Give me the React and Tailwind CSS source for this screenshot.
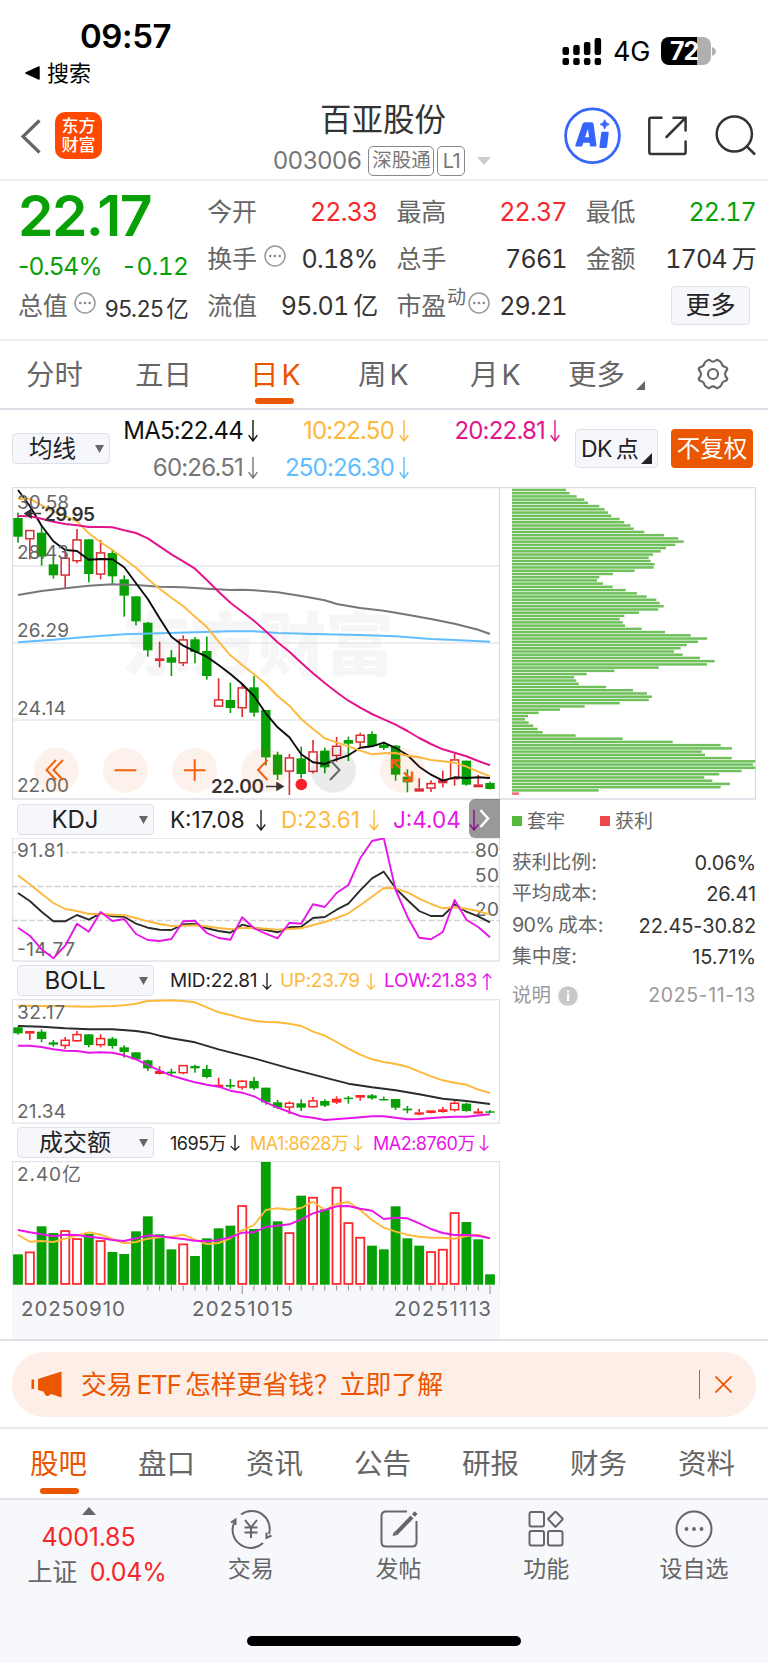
import React from "react";

const X0 = 18;
const STEP = 11.8;
const px = (i) => X0 + i * STEP;

/* Series values are stored in thirds of a pixel, measured from each panel's origin. */
const seq = (values, origin) => values.map((v, i) => `${px(i).toFixed(1)},${(origin + v / 3).toFixed(1)}`).join(" ");
const pts = (pairs, origin) => pairs.map(([i, v]) => `${px(i).toFixed(1)},${(origin + v / 3).toFixed(1)}`).join(" ");

const PRICE = [
  ["g", 98, 114, 170, 188], ["r", 150, 150, 178, 238], ["g", 138, 158, 230, 257], ["g", 233, 253, 286, 296],
  ["r", 208, 233, 287, 323], ["r", 147, 178, 244, 250], ["g", 178, 178, 282, 307], ["r", 180, 217, 284, 298],
  ["g", 207, 219, 289, 311], ["g", 286, 298, 347, 410], ["g", 349, 349, 424, 436], ["g", 426, 428, 511, 530],
  ["r", 485, 535, 543, 562], ["g", 510, 532, 548, 588], ["r", 466, 478, 550, 558], ["g", 471, 478, 516, 550],
  ["g", 470, 513, 588, 599], ["r", 595, 658, 680, 680], ["g", 608, 660, 684, 699], ["r", 610, 622, 685, 711],
  ["g", 588, 622, 698, 710], ["g", 690, 690, 832, 856], ["g", 815, 824, 884, 900], ["r", 822, 832, 875, 945],
  ["g", 800, 835, 882, 895], ["r", 780, 814, 876, 880], ["g", 803, 812, 862, 880], ["r", 771, 797, 828, 845],
  ["g", 770, 780, 791, 843], ["r", 758, 764, 788, 803], ["g", 754, 762, 798, 800], ["g", 785, 794, 804, 810],
  ["g", 795, 797, 884, 902], ["g", 868, 890, 907, 937], ["r", 895, 925, 935, 935], ["r", 901, 909, 926, 936],
  ["r", 872, 900, 910, 922], ["r", 822, 838, 898, 917], ["g", 842, 842, 914, 917], ["r", 885, 913, 922, 922],
  ["g", 905, 909, 927, 928],
];
const MA5 = [30, 78, 137, 184, 210, 213, 239, 237, 238, 262, 310, 357, 415, 470, 497, 514, 530, 555, 582, 612, 648, 700, 742, 772, 823, 847, 852, 838, 826, 803, 799, 788, 804, 825, 860, 884, 902, 892, 894, 892, 894];
const MA10 = [56, 56, 76, 94, 108, 124, 160, 187, 210, 236, 263, 297, 326, 353, 378, 410, 441, 485, 526, 555, 583, 612, 648, 677, 717, 747, 775, 787, 799, 812, 823, 820, 819, 827, 832, 840, 844, 848, 860, 875, 889];
const MA20 = [108, 109, 116, 125, 132, 136, 141, 141, 142, 151, 159, 175, 199, 223, 244, 266, 300, 335, 368, 395, 422, 454, 487, 515, 548, 580, 609, 637, 662, 683, 702, 718, 734, 753, 774, 792, 808, 818, 829, 843, 856];
const MA60 = [[0, 345], [2, 333], [4, 325], [6, 317], [8, 313], [10, 315], [12, 320], [14, 322], [16, 326], [18, 330], [19, 329], [20, 331], [22, 337], [24, 348], [26, 361], [27, 372], [29, 384], [31, 392], [33, 404], [35, 417], [37, 431], [39, 449], [40, 462]];
const MA250 = [[0, 487], [3, 479], [6, 470], [9, 463], [12, 460], [15, 457], [18, 454], [20, 454], [22, 459], [25, 462], [29, 465], [32, 469], [35, 477], [37, 480], [40, 485]];

const K = [294, 318, 350, 379, 379, 360, 374, 355, 364, 365, 386, 398, 404, 405, 388, 387, 400, 408, 413, 389, 398, 405, 412, 397, 395, 369, 366, 344, 326, 286, 250, 230, 280, 315, 348, 363, 363, 328, 350, 364, 382];
const D = [241, 268, 296, 324, 342, 348, 357, 357, 359, 361, 369, 379, 387, 393, 392, 391, 394, 399, 403, 399, 399, 401, 404, 402, 400, 390, 381, 369, 355, 331, 305, 279, 280, 292, 311, 327, 340, 337, 341, 348, 359];
const J = [398, 422, 463, 490, 452, 386, 410, 351, 378, 372, 417, 435, 438, 432, 379, 377, 414, 429, 434, 367, 400, 416, 430, 383, 386, 328, 336, 294, 270, 190, 138, 130, 285, 365, 428, 433, 411, 315, 374, 396, 427];

const BOLL = [
  ["g", 200, 202, 220, 224], ["r", 213, 213, 221, 240], ["g", 208, 215, 237, 246], ["g", 240, 247, 254, 260],
  ["r", 231, 239, 258, 267], ["r", 213, 222, 244, 246], ["g", 223, 223, 255, 262], ["r", 223, 234, 256, 262],
  ["g", 231, 236, 258, 266], ["g", 256, 262, 276, 293], ["g", 277, 277, 298, 300], ["g", 299, 301, 325, 333],
  ["r", 319, 333, 342, 343], ["g", 326, 335, 340, 348], ["r", 315, 315, 340, 343], ["g", 314, 318, 325, 338],
  ["g", 315, 327, 351, 355], ["r", 353, 374, 381, 381], ["g", 357, 375, 380, 386], ["r", 360, 362, 383, 389],
  ["g", 351, 363, 385, 390], ["g", 383, 383, 427, 434], ["g", 420, 427, 443, 447], ["r", 424, 428, 443, 462],
  ["g", 418, 430, 443, 453], ["r", 411, 421, 442, 443], ["g", 418, 423, 437, 441], ["r", 409, 416, 428, 432],
  ["g", 408, 413, 417, 431], ["r", 405, 405, 413, 422], ["g", 402, 406, 415, 419], ["g", 410, 417, 420, 421],
  ["g", 417, 417, 443, 450], ["g", 438, 446, 451, 460], ["r", 447, 457, 464, 466], ["r", 451, 451, 459, 460],
  ["r", 441, 448, 456, 458], ["r", 423, 428, 451, 455], ["g", 428, 431, 453, 455], ["r", 445, 454, 461, 463],
  ["g", 450, 454, 457, 459],
];
const UP = [[0, 137], [4, 139], [6, 140], [8, 138], [9, 136], [10, 131], [11, 123], [13, 121], [14, 123], [15, 127], [16, 142], [17, 157], [18, 165], [19, 175], [20, 182], [21, 186], [22, 187], [23, 191], [24, 198], [25, 215], [26, 227], [27, 246], [28, 266], [29, 284], [30, 298], [31, 306], [32, 312], [33, 320], [34, 335], [35, 349], [36, 361], [37, 368], [38, 374], [39, 389], [40, 399]];
const MID = [[0, 198], [2, 200], [4, 205], [6, 208], [8, 208], [10, 213], [11, 218], [12, 227], [13, 235], [15, 247], [17, 268], [20, 295], [23, 325], [26, 353], [28, 371], [30, 382], [32, 391], [34, 403], [36, 416], [38, 423], [40, 432]];
const LOW = [[0, 257], [1, 257], [2, 261], [3, 268], [4, 272], [5, 273], [6, 278], [7, 277], [8, 278], [9, 286], [10, 298], [11, 315], [12, 332], [13, 347], [14, 357], [15, 367], [16, 374], [17, 380], [18, 392], [19, 398], [20, 409], [21, 427], [22, 443], [23, 456], [24, 469], [25, 473], [26, 480], [28, 475], [30, 469], [31, 469], [33, 478], [34, 477], [36, 472], [37, 470], [38, 470], [40, 463]];

const VOL = "g403 r396 g319 g339 r332 r356 g342 r362 g396 g402 g334 g289 g343 g388 r372 g408 g355 g325 g317 r257 g327 g126 g304 r338 g227 r232 g268 r202 r308 r352 g377 g388 g259 g355 g377 r395 r388 r278 g306 g358 g463"
  .split(" ")
  .map((s) => [s[0], Number(s.slice(1))]);
const VMA1 = [344, 365, 363, 366, 356, 347, 337, 344, 357, 370, 366, 356, 352, 350, 344, 359, 372, 369, 355, 331, 315, 270, 265, 269, 264, 245, 270, 252, 246, 270, 300, 323, 335, 344, 350, 353, 353, 356, 348, 344, 355];
const VMA2 = [330, 337, 343, 349, 344, 345, 350, 354, 360, 363, 355, 346, 349, 353, 357, 362, 364, 360, 352, 338, 337, 321, 317, 313, 298, 280, 270, 259, 258, 266, 272, 297, 293, 295, 310, 327, 339, 345, 345, 347, 355];

const CHIPS = [198, 209, 230, 253, 264, 298, 314, 324, 334, 359, 373, 391, 401, 433, 492, 535, 551, 526, 498, 482, 459, 446, 452, 464, 461, 404, 339, 298, 291, 309, 338, 377, 411, 440, 469, 479, 491, 475, 417, 373, 359, 368, 375, 425, 495, 572, 621, 594, 560, 542, 522, 548, 600, 644, 621, 476, 343, 260, 222, 229, 236, 318, 399, 441, 456, 446, 359, 254, 180, 116, 84, 75, 86, 100, 113, 128, 227, 368, 518, 662, 696, 605, 615, 695, 766, 759, 766, 725, 658, 613, 637, 690, 662, 296, 57];

const GREEN = "#07a007";

function Candles({ data, origin, red }) {
  return data.map(([c, h, t, b, l], i) => {
    const x = px(i);
    const y = (v) => origin + v / 3;
    if (c === "g") {
      return (
        <g key={i} fill={GREEN}>
          <rect x={x - 0.8} y={y(h)} width="1.6" height={(l - h) / 3} />
          <rect x={x - 4.7} y={y(t)} width="9.4" height={Math.max((b - t) / 3, 1.4)} />
        </g>
      );
    }
    const thin = b - t < 14;
    return (
      <g key={i} fill={red}>
        <rect x={x - 0.8} y={y(h)} width="1.6" height={Math.max((t - h) / 3, 0)} />
        <rect x={x - 0.8} y={y(b)} width="1.6" height={Math.max((l - b) / 3, 0)} />
        {thin ? (
          <rect x={x - 4.7} y={y(t)} width="9.4" height={(b - t) / 3} />
        ) : (
          <rect x={x - 4} y={y(t) + 0.6} width="8" height={(b - t) / 3 - 1.2} fill="#fff" stroke={red} strokeWidth="1.5" />
        )}
      </g>
    );
  });
}

function Line({ points, color, w = 1.9 }) {
  return <polyline points={points} fill="none" stroke={color} strokeWidth={w} strokeLinejoin="round" />;
}

function Label({ x, y, w, children, size = 19, fill = "#666", weight = 400 }) {
  return (
    <text x={x} y={y} fontSize={size} fill={fill} fontWeight={weight} textLength={w} lengthAdjust="spacing">
      {children}
    </text>
  );
}

function Arrow({ up = false, h = 21 }) {
  return (
    <svg width="10" height={h} viewBox="0 0 10 21" preserveAspectRatio="none" fill="none" stroke="currentColor" strokeWidth="1.4" className={up ? "shrink-0 rotate-180" : "shrink-0"}>
      <path d="M5 0V20M0.7 14.5L5 20L9.3 14.5" />
    </svg>
  );
}

function Dots() {
  return (
    <svg width="22" height="22" viewBox="0 0 22 22" className="shrink-0">
      <circle cx="11" cy="11" r="10" fill="none" stroke="#999" strokeWidth="1.5" />
      <g fill="#888">
        <circle cx="6.3" cy="11" r="1.3" />
        <circle cx="11" cy="11" r="1.3" />
        <circle cx="15.7" cy="11" r="1.3" />
      </g>
    </svg>
  );
}

function Caret() {
  return (
    <svg width="9" height="8" viewBox="0 0 9 8" className="shrink-0">
      <path d="M0 0H9L4.5 8Z" fill="#666" />
    </svg>
  );
}

function StatusBar() {
  return (
    <div className="flex h-[92px] justify-between">
      <div className="flex flex-col pt-[18px] pl-[25px] text-black">
        <span className="pl-[55px] text-[33px] leading-[36px] font-semibold tracking-[-0.4px]">09:57</span>
        <span className="mt-[6px] flex items-center text-[22px] leading-[26px] font-normal">
          <svg width="15" height="14" viewBox="0 0 15 14" className="mr-[7px]">
            <path d="M1 7L14 1V13Z" stroke="#000" strokeWidth="1.5" strokeLinejoin="round" />
          </svg>
          搜索
        </span>
      </div>
      <div className="mt-[37px] mr-[52px] flex h-[28px] items-center text-black">
        <svg width="40" height="27" viewBox="0 0 40 27">
          <rect x="0.5" y="9" width="6.5" height="8" rx="2" />
          <rect x="11.2" y="7" width="6.5" height="10" rx="2" />
          <rect x="21.9" y="4" width="6.5" height="13" rx="2" />
          <rect x="32.6" y="0" width="6.5" height="17" rx="2" />
          <rect x="0.5" y="20" width="6.5" height="7" rx="2" />
          <rect x="11.2" y="20" width="6.5" height="7" rx="2" />
          <rect x="21.9" y="20" width="6.5" height="7" rx="2" />
          <rect x="32.6" y="20" width="6.5" height="7" rx="2" />
        </svg>
        <span className="ml-[11px] pt-[2px] text-[27px] leading-[32px] font-normal tracking-[-0.3px]">4G</span>
        <span className="ml-[11px] flex h-[28px] w-[50px] items-center rounded-[8px] bg-linear-to-r from-black from-72% to-[#b0b0b0] to-72% pl-[9px] text-[25px] leading-[32px] font-bold tracking-[-1px] text-white">72</span>
        <svg width="4" height="9" viewBox="0 0 4 9" className="ml-[1px]">
          <path d="M0 0C3 1 4 3 4 4.500S3 8 0 9Z" fill="#b0b0b0" />
        </svg>
      </div>
    </div>
  );
}

function Header() {
  return (
    <div className="flex h-[89px] items-start border-b-2 border-[#f0f0f2] pr-[12px] pl-[20px]">
      <svg width="21" height="35" viewBox="0 0 21 35" className="mt-[27px]" fill="none" stroke="#666" strokeWidth="3.200">
        <path d="M19.500 1.500L3 17.500L19.500 33.500" />
      </svg>
      <div className="mt-[20px] ml-[14px] flex h-[47px] w-[47px] flex-col items-center justify-center rounded-[10px] bg-[#ff4800] text-[17px] leading-[19px] font-medium text-white">
        <span>东方</span>
        <span>财富</span>
      </div>
      <div className="ml-[171px] flex w-[220px] flex-col">
        <span className="mt-[8px] pl-[47px] text-[31.500px] leading-[40px] text-[#333]">百亚股份</span>
        <div className="mt-[6px] flex items-center text-[#777]">
          <span className="text-[24px] leading-[30px] tracking-[-0.3px]">003006</span>
          <span className="ml-[7px] flex h-[30px] w-[66px] items-center justify-center rounded-[5px] border-[1.500px] border-[#888] text-[19.500px]">深股通</span>
          <span className="ml-[3px] flex h-[30px] w-[28px] items-center justify-center rounded-[5px] border-[1.500px] border-[#888] text-[20px] tracking-[-0.5px]">L1</span>
          <svg width="14" height="8" viewBox="0 0 14 8" className="ml-[12px]">
            <path d="M0 0H14L7 8Z" fill="#ccc" />
          </svg>
        </div>
      </div>
      <svg width="58" height="58" viewBox="0 0 58 58" className="mt-[15px] ml-[70px]">
        <circle cx="29.500" cy="28.800" r="26.900" fill="#fff" stroke="#3565fa" strokeWidth="2.800" />
        <g fill="#3565fa">
          <path fillRule="evenodd" d="M13 39.500Q12 39.500 12.400 38L19.500 17Q20 15.300 22 15.300H28.500Q30.300 15.300 30.600 17L33.500 38.200Q33.600 39.500 32.300 39.500H28Q27 39.500 26.900 38.500L26.500 35.800H20.300L19.500 38.300Q19.200 39.500 18 39.500ZM22 30.300L25 22L26 30.300Z" />
          <path d="M39.500 24.700H44.500Q45.900 24.700 45.700 26L44 40Q43.800 41 42.700 41H37.500Q36.200 41 36.400 39.700L37.200 33.500L38.200 26Q38.300 24.700 39.500 24.700Z" />
          <path d="M41.700 12.600Q42.500 16.500 46.300 17.300Q42.500 18.100 41.700 22Q40.900 18.100 37.100 17.300Q40.900 16.500 41.700 12.600Z" stroke="#3565fa" strokeWidth="0.800" />
        </g>
      </svg>
      <svg width="42" height="42" viewBox="0 0 42 42" className="mt-[24px] ml-[25px]" fill="none" stroke="#333" strokeWidth="2.500" strokeLinecap="round">
        <path d="M15.500 1.700H5Q3.300 1.700 3.300 3.500V36Q3.300 38 5.200 38H37.800Q39.600 38 39.600 36.200V25.500" />
        <path d="M27.500 1.700H39.600V14.500M39 2.300L20.500 21" />
      </svg>
      <svg width="42" height="42" viewBox="0 0 42 42" className="mt-[23px] ml-[26px]" fill="none" stroke="#333" strokeWidth="2.500">
        <circle cx="20.300" cy="19" r="17.600" />
        <path d="M32.800 31.300L41 39.500" />
      </svg>
    </div>
  );
}

function Stat({ label, value, unit, tone = "text-[#333]", icon, sup }) {
  return (
    <div className="flex h-[47px] items-center justify-between">
      <span className="flex items-center text-[25px] tracking-[-0.3px] text-[#666]">
        {label}
        {sup && <span className="mb-[16px] ml-px text-[19px]">{sup}</span>}
        {icon && <span className={sup ? "mb-[8px] ml-[2px]" : "mb-[8px] ml-[7px]"}><Dots /></span>}
      </span>
      <span className={`mr-[-1px] text-[25px] tracking-[-0.8px] whitespace-nowrap tabular-nums ${tone}`}>
        {value}
        {unit && <span className="pl-[5px]">{unit}</span>}
      </span>
    </div>
  );
}

function Quote() {
  const red = "text-[#f6262a]";
  const green = "text-[#07a007]";
  return (
    <div className="h-[160px] border-b-2 border-[#ececee] pt-[8px] pr-[13px] pl-[18px]">
      <div className="grid grid-cols-4 gap-x-[20px]">
        <div className="flex h-[47px] items-center pt-[6px] text-[57px] leading-none font-semibold tracking-[-1.600px] text-[#07a007]">22.17</div>
        <Stat label="今开" value="22.33" tone={red} />
        <Stat label="最高" value="22.37" tone={red} />
        <Stat label="最低" value="22.17" tone={green} />
        <div className="mr-[-1px] flex h-[47px] items-center justify-between pt-[13px] text-[24.500px] tracking-[-0.6px] text-[#07a007]">
          <span>-0.54%</span>
          <span className="tabular-nums">-0.12</span>
        </div>
        <Stat label="换手" value="0.18%" icon />
        <Stat label="总手" value="7661" />
        <Stat label="金额" value="1704" unit="万" />
        <div className="mr-[-1px] flex h-[47px] items-center justify-between">
          <span className="flex items-center text-[25px] tracking-[-0.3px] text-[#666]">
            总值
            <span className="mb-[8px] ml-[7px]"><Dots /></span>
          </span>
          <span className="pt-[4px] text-[22.500px] tracking-[-0.5px] whitespace-nowrap text-[#333]">95.25<span className="pl-[3px]">亿</span></span>
        </div>
        <Stat label="流值" value="95.01" unit="亿" />
        <Stat label="市盈" value="29.21" icon sup="动" />
        <div className="flex h-[47px] items-center justify-end pr-[5px]">
          <button className="mb-[3px] h-[39px] w-[79px] rounded-[4px] border border-[#dfe1ea] bg-[#f6f7fb] text-[25px] leading-[36px] text-[#222]">更多</button>
        </div>
      </div>
    </div>
  );
}

function PeriodTabs() {
  return (
    <div className="flex h-[69px] items-start border-b-2 border-[#dddfe6] pt-[13px] pl-[26px] text-[28.500px] leading-[42px] text-[#666]">
      <span className="w-[109px]">分时</span>
      <span className="w-[115px]">五日</span>
      <span className="flex w-[108px] flex-col text-[#eb5600]">
        <span>日<span className="pl-[3px]">K</span></span>
        <span className="mt-[2px] ml-[5px] h-[6px] w-[39px] rounded-full bg-[#eb5600]" />
      </span>
      <span className="w-[112px]">周<span className="pl-[3px]">K</span></span>
      <span className="w-[98px]">月<span className="pl-[3px]">K</span></span>
      <span>更多</span>
      <svg width="9" height="9" viewBox="0 0 9 9" className="mt-[27px] ml-[11px]">
        <path d="M9 0V9H0Z" fill="#666" />
      </svg>
      <svg width="34" height="34" viewBox="0 0 34 34" className="mt-[3px] ml-[51px]" fill="none" stroke="#666" strokeWidth="2.200" strokeLinejoin="round">
        <path d="M11.500 3.500Q13 2.300 14.300 3.500Q17 5.800 19.700 3.500Q21 2.300 22.500 3.500Q25 4.300 25.600 6.500Q26.300 9.500 29.300 10Q31.200 10.500 31.200 12.500Q29 15 29 17Q29 19 31.200 21.500Q31.200 23.500 29.300 24Q26.300 24.500 25.600 27.500Q25 29.700 22.500 30.500Q21 31.700 19.700 30.500Q17 28.200 14.300 30.500Q13 31.700 11.500 30.500Q9 29.700 8.400 27.500Q7.700 24.500 4.700 24Q2.800 23.500 2.800 21.500Q5 19 5 17Q5 15 2.800 12.500Q2.800 10.500 4.700 10Q7.700 9.500 8.400 6.500Q9 4.300 11.500 3.500Z" />
        <circle cx="17" cy="17" r="5" />
      </svg>
    </div>
  );
}

function Ma({ children, color }) {
  return (
    <span className={`flex items-center justify-end gap-[5px] text-[24px] leading-[37px] tracking-[-0.8px] whitespace-nowrap ${color}`}>
      {children}
      <Arrow h={22} />
    </span>
  );
}

function MaRow() {
  return (
    <div className="flex h-[77px] items-start pl-[12px]">
      <button className="mt-[23px] flex h-[31px] w-[98px] items-center rounded-[4px] border border-[#dfe1ea] bg-[#f6f7fb] pl-[16px] text-[23.500px] leading-[28px] text-[#222]">
        均线
        <span className="ml-[19px]"><Caret /></span>
      </button>
      <div className="mt-[2px] ml-[11px] grid w-[440px] grid-cols-[137px_151px_151px]">
        <Ma color="text-[#111]">MA5:22.44</Ma>
        <Ma color="text-[#fdb93c]">10:22.50</Ma>
        <Ma color="text-[#e4148c]">20:22.81</Ma>
        <Ma color="text-[#777]">60:26.51</Ma>
        <Ma color="text-[#62bdff]">250:26.30</Ma>
      </div>
      <button className="relative mt-[19px] ml-[14px] h-[39px] w-[83px] rounded-[4px] border border-[#dfe1ea] bg-[#f6f7fb] pl-[5px] text-left text-[23px] leading-[36px] tracking-[-0.7px] text-[#222]">
        DK<span className="pl-[4px]">点</span>
        <svg width="11" height="11" viewBox="0 0 11 11" className="absolute right-[5px] bottom-[3px]">
          <path d="M11 0V11H0Z" fill="#222" />
        </svg>
      </button>
      <button className="mt-[19px] ml-[13px] h-[39px] w-[82px] rounded-[4px] bg-[#eb5600] text-[23.500px] leading-[36px] text-white">不复权</button>
    </div>
  );
}

function PriceChart() {
  const o = 480;
  return (
    <svg width="488" height="313" viewBox="12 487 488 313" className="block">
      <text x="122" y="670" fontSize="69" fontWeight="900" fill="#f6f6f6" textLength="272">东方财富</text>
      <g stroke="#e6e8f0" strokeWidth="1.500">
        <path d="M12 566H500M12 643H500M12 720H500" />
        <rect x="12.500" y="487.500" width="487" height="311.500" fill="none" stroke="#dcdde6" />
      </g>
      <Candles data={PRICE} origin={o} red="#d92b32" />
      <Line points={pts(MA60, o)} color="#777" w={2.1} />
      <Line points={pts(MA250, o)} color="#62bdff" w={2.1} />
      <Line points={seq(MA5, o)} color="#0c0c0c" />
      <Line points={seq(MA10, o)} color="#fdb93c" />
      <Line points={seq(MA20, o)} color="#e4148c" w={2} />
      <Label x={17} y={509} w={52}>30.58</Label>
      <Label x={17} y={559} w={52}>28.43</Label>
      <Label x={17} y={636.5} w={52}>26.29</Label>
      <Label x={17} y={714.5} w={49}>24.14</Label>
      <Label x={17} y={792} w={52}>22.00</Label>
      <path d="M41 513.500H26M31 509.500L25 513.500L31 517.500Z" stroke="#333" fill="#333" strokeWidth="1.500" />
      <Label x={44} y={520.5} w={51} fill="#333" weight={600}>29.95</Label>
      <Label x={211} y={793} w={53} fill="#333" weight={600}>22.00</Label>
      <path d="M266 786.500H281M277 783L283 786.500L277 790Z" stroke="#333" fill="#333" strokeWidth="1.500" />
      <circle cx="301.300" cy="784.500" r="5.800" fill="#f9202a" />
      <g fill="#eb5600" fillOpacity="0.08">
        <circle cx="56.300" cy="770.300" r="22.500" />
        <circle cx="125.300" cy="770.300" r="22.500" />
        <circle cx="194.700" cy="770.300" r="22.500" />
        <circle cx="264" cy="770.300" r="22.500" />
        <circle cx="402.500" cy="770.300" r="22.500" />
        <circle cx="333.500" cy="770.300" r="22.500" fill="#000" />
      </g>
      <g fill="none" stroke="#f4610f" strokeWidth="2">
        <path d="M56 760L46.500 770L56 780M63 760L53.500 770L63 780" />
        <path d="M114.500 770.300H136.300M184 770.300H205.500M194.700 759.300V781" />
        <path d="M267.500 760L258 770L267.500 780" />
        <path d="M400 768L392.500 760.500M392 768.500V760.500H400.500M404 772.500L412 780.500M403.500 780.500H412V771.500" strokeWidth="2.400" />
        <path d="M330 760L339.500 770L330 780" stroke="#666" />
      </g>
    </svg>
  );
}

function IndicatorRow({ name, height, size, children }) {
  return (
    <div className={`flex items-start pl-[5px] ${height}`}>
      <button className="flex h-[31px] w-[137px] shrink-0 items-center rounded-[4px] border border-[#dfe1ea] bg-[#f6f7fb] pr-[5px] text-[24px] leading-[28px] text-[#222]">
        <span className="flex-1 pr-[7px] pt-px text-center">{name}</span>
        <Caret />
      </button>
      <div className={`ml-[16px] flex h-[32px] items-center whitespace-nowrap ${size}`}>{children}</div>
    </div>
  );
}

function Kdj() {
  return (
    <>
      <div className="relative">
        <IndicatorRow name="KDJ" height="h-[38px] pt-[4px]" size="text-[22.500px]">
          <span className="flex w-[111px] items-center gap-[11px] text-[#222]">K:17.08<Arrow /></span>
          <span className="flex w-[112px] items-center gap-[9px] text-[#fdb93c]">D:23.61<Arrow /></span>
          <span className="flex items-center gap-[8px] text-[#e815e8]">J:4.04<Arrow /></span>
        </IndicatorRow>
        <div className="absolute top-[-1px] right-0 flex h-[39px] w-[31px] items-center justify-center rounded-l-[6px] bg-black/40">
          <svg width="11" height="19" viewBox="0 0 11 19" fill="none" stroke="#fff" strokeWidth="2.600">
            <path d="M1.500 1L9 9.500L1.500 18" />
          </svg>
        </div>
      </div>
      <svg width="488" height="124" viewBox="12 838 488 124" className="block">
        <rect x="12.500" y="838" width="487" height="123" fill="none" stroke="#e2e3ea" strokeWidth="1.500" />
        <path d="M12 852.500H500M12 886.500H500M12 920.500H500" stroke="#d2d2d2" strokeWidth="1.600" strokeDasharray="6 2.500" />
        <path d="M16 852.500H66M475 852.500H500" stroke="#fff" strokeWidth="3" />
        <Label x={17} y={857} w={47}>91.81</Label>
        <Label x={17} y={956} w={58}>-14.77</Label>
        <Label x={475} y={857} w={24}>80</Label>
        <Label x={475} y={882} w={24}>50</Label>
        <Label x={475} y={916} w={24}>20</Label>
        <Line points={seq(K, 795)} color="#2b2b2b" />
        <Line points={seq(D, 795)} color="#fdb93c" />
        <Line points={seq(J, 795)} color="#e815e8" />
      </svg>
    </>
  );
}

function Boll() {
  return (
    <>
      <IndicatorRow name="BOLL" height="h-[37px] pt-[3px]" size="text-[19px] leading-[34px]">
        <span className="flex w-[110px] items-center gap-[5px] tracking-[-0.2px] text-[#222]">MID:22.81<Arrow h={17} /></span>
        <span className="flex w-[104px] items-center gap-[6px] tracking-[-0.3px] text-[#fdb93c]">UP:23.79<Arrow h={17} /></span>
        <span className="flex items-center gap-[5px] tracking-[-0.3px] text-[#e815e8]">LOW:21.83<Arrow up h={17} /></span>
      </IndicatorRow>
      <svg width="488" height="125" viewBox="12 999 488 125" className="block">
        <rect x="12.500" y="999.700" width="487" height="123.500" fill="none" stroke="#e2e3ea" strokeWidth="1.300" />
        <Line points={pts(UP, 960)} color="#fdb93c" />
        <Label x={17} y={1019} w={48}>32.17</Label>
        <Label x={17} y={1118} w={49}>21.34</Label>
        <Candles data={BOLL} origin={960} red="#fa2226" />
        <Line points={pts(MID, 960)} color="#2b2b2b" />
        <Line points={pts(LOW, 960)} color="#e815e8" />
      </svg>
    </>
  );
}

function Volume() {
  const base = 1284.7;
  return (
    <>
      <IndicatorRow name="成交额" height="h-[37px] pt-[3px]" size="text-[18px] tracking-[-0.5px]">
        <span className="flex w-[80px] items-center gap-[4px] text-[#222]">1695万<Arrow h={16} /></span>
        <span className="flex w-[123px] items-center gap-[4px] text-[#fdb93c]">MA1:8628万<Arrow h={16} /></span>
        <span className="flex items-center gap-[4px] text-[#e815e8]">MA2:8760万<Arrow h={16} /></span>
      </IndicatorRow>
      <svg width="488" height="178" viewBox="12 1161 488 178" className="block">
        <rect x="12" y="1285" width="488" height="54" fill="#f7f8fb" />
        <path d="M12.500 1285V1161.700H499.500V1285" fill="none" stroke="#e2e3ea" strokeWidth="1.300" />
        {VOL.map(([c, t], i) => {
          const y = 1120 + t / 3;
          return c === "g" ? (
            <rect key={i} x={px(i) - 4.9} y={y} width="9.8" height={base - y} fill={GREEN} />
          ) : (
            <rect key={i} x={px(i) - 4.1} y={y + 0.4} width="8.2" height={base - y - 1.2} fill="#fff" stroke="#fa2a2e" strokeWidth="1.800" />
          );
        })}
        <g stroke="#8c8c8c" strokeWidth="1">
          {Array.from({ length: 30 }, (_, k) => k + 11).map((i) => (
            <line key={i} x1={px(i)} x2={px(i)} y1="1285.500" y2={i === 19 || i === 40 ? 1294 : 1290.5} />
          ))}
        </g>
        <Line points={seq(VMA1, 1120)} color="#fdb93c" />
        <Line points={seq(VMA2, 1120)} color="#e815e8" />
        <Label x={17} y={1181} w={64} weight={375}>2.40亿</Label>
        <Label x={21} y={1316} w={104} size={20.5}>20250910</Label>
        <Label x={192} y={1316} w={101} size={20.5}>20251015</Label>
        <Label x={394} y={1316} w={97} size={20.5}>20251113</Label>
      </svg>
    </>
  );
}

function ChipRow({ label, value }) {
  return (
    <div className="flex h-[31.500px] items-center justify-between">
      <span className="text-[19.800px] text-[#666]">{label}</span>
      <span className="text-[20px] tracking-[-0.1px] text-[#333]">{value}</span>
    </div>
  );
}

function ChipPanel() {
  return (
    <div className="w-[256px]">
      <svg width="256" height="313" viewBox="500 487 256 313" className="block">
        <path d="M500 487.500H755.500V799H500" fill="none" stroke="#dcdde6" strokeWidth="1.500" />
        {CHIPS.map((e, i) => (
          <rect key={i} x="512" y={488.7 + i * 3.2305} width={(e - 36) / 3} height="2.5" fill={i === 94 ? "#f4696b" : "#6fc05b"} />
        ))}
      </svg>
      <div className="pl-[12px]">
        <div className="mt-[8px] flex h-[28px] items-center text-[19px] text-[#666]">
          <span className="mr-[5px] mb-[2px] h-[10px] w-[10px] bg-[#56b83c]" />
          <span className="w-[73px]">套牢</span>
          <span className="mr-[5px] mb-[2px] h-[10px] w-[10px] bg-[#ee474a]" />
          <span>获利</span>
        </div>
        <div className="mt-[11px]">
          <ChipRow label="获利比例:" value="0.06%" />
          <ChipRow label="平均成本:" value="26.41" />
          <ChipRow label={<><span className="tracking-[-0.7px]">90%</span><span className="pl-[4px]">成本:</span></>} value="22.45-30.82" />
          <ChipRow label="集中度:" value="15.71%" />
        </div>
        <div className="mt-[7px] flex h-[31px] items-center text-[19.500px] text-[#999]">
          说明
          <svg width="20" height="20" viewBox="0 0 20 20" className="ml-[7px]">
            <circle cx="10" cy="10" r="9.800" fill="#c8c8c8" />
            <rect x="9" y="8" width="2.200" height="7" fill="#fff" />
            <rect x="9" y="4.500" width="2.200" height="2.200" fill="#fff" />
          </svg>
          <span className="ml-auto tracking-[0.6px]">2025-11-13</span>
        </div>
      </div>
    </div>
  );
}

function Banner() {
  return (
    <div className="h-[90px] border-t-2 border-b-2 border-t-[#dfe0e6] border-b-[#e8e8ea] px-[12px] pt-[11px]">
      <div className="flex h-[65px] w-[744px] items-center rounded-[32px] bg-[#fdeee7] pl-[19px] text-[25.800px] text-[#eb5600]">
        <svg width="32" height="27" viewBox="0 0 32 27" className="mr-[18px]" fill="#eb5600">
          <rect x="0.500" y="8.500" width="2.600" height="9.500" />
          <path d="M7 8L30.500 0.500V26.500L23 24L20 23L18 24.500Q16 26 14 23.500L12.500 20.500L7 19Z" />
        </svg>
        <span className="pt-px whitespace-nowrap">交易<span className="px-[4px] tracking-[-1px]">ETF</span>怎样更省钱？立即了解</span>
        <span className="ml-auto h-[29px] w-[1.500px] bg-[#eb5600]" />
        <svg width="17" height="17" viewBox="0 0 17 17" className="mr-[24px] ml-[15px]" fill="none" stroke="#eb5600" strokeWidth="1.800">
          <path d="M0.500 0.500L16.500 16.500M16.500 0.500L0.500 16.500" />
        </svg>
      </div>
    </div>
  );
}

function InfoTabs() {
  return (
    <div className="flex h-[71px] border-b-2 border-[#dfe3e6] pt-[14px] pl-[30px] text-[28.500px] leading-[42px] text-[#666]">
      {["股吧", "盘口", "资讯", "公告", "研报", "财务", "资料"].map((t, i) => (
        <span key={t} className={i === 0 ? "flex w-[108px] shrink-0 flex-col text-[#eb5600]" : "w-[108px] shrink-0"}>
          <span>{t}</span>
          {i === 0 && <span className="mt-[3px] ml-[10px] h-[6px] w-[39px] rounded-full bg-[#eb5600]" />}
        </span>
      ))}
    </div>
  );
}

function Action({ label, children }) {
  return (
    <div className="flex w-[147.700px] flex-col items-center pt-[9px]">
      <svg width="44" height="40" viewBox="0 0 44 40" fill="none" stroke="#666" strokeWidth="2">
        {children}
      </svg>
      <span className="mt-[4px] text-[23px] leading-[32px] text-[#666]">{label}</span>
    </div>
  );
}

function BottomBar() {
  return (
    <div className="flex h-[163px] flex-col bg-[#f7f8fb]">
      <div className="flex h-[136px]">
        <div className="flex w-[177px] shrink-0 flex-col items-center pt-[7px]">
          <svg width="14" height="8" viewBox="0 0 14 8">
            <path d="M0 8H14L7 0Z" fill="#666" />
          </svg>
          <span className="mt-[4px] text-[25px] leading-[36px] tracking-[-0.2px] text-[#f6262a]">4001.85</span>
          <span className="mt-px ml-[17px] text-[25px] leading-[32px] tracking-[-0.3px] whitespace-nowrap text-[#666]">
            上证 <span className="ml-[6px] text-[#f6262a]">0.04%</span>
          </span>
        </div>
        <Action label="交易">
          <path d="M12 5.500A18 18 0 0 1 40 25M34 34A18 18 0 0 1 6 12" />
          <path d="M2 13.500L6.500 10.500V16M42.500 26.500L37.500 29V23.500" />
          <path d="M16 11L22 18.500L28 11M22 18.500V29M15.500 18.500H28.500M15.500 23.500H28.500" />
        </Action>
        <Action label="发帖">
          <path d="M30 2.500H9Q4.500 2.500 4.500 7V33Q4.500 37.500 9 37.500H35Q39.500 37.500 39.500 33V12" />
          <path d="M35 8L19 24.500" strokeWidth="4" />
          <path d="M36.500 6.500L39 3.500" strokeWidth="4" />
          <path d="M17 22.500L15.500 27L20.500 26Z" fill="#666" stroke="none" />
        </Action>
        <Action label="功能">
          <rect x="5.500" y="3" width="14.500" height="14.500" rx="2" />
          <rect x="5.500" y="22" width="14.500" height="14.500" rx="2" />
          <rect x="24" y="22" width="14.500" height="14.500" rx="2" />
          <path d="M31 3Q31.500 2.500 32 3L38.500 9.500Q39 10 38.500 10.500L32 17.500Q31.500 18 31 17.500L24.500 10.500Q24 10 24.500 9.500Z" />
        </Action>
        <Action label="设自选">
          <circle cx="22" cy="20" r="17.500" />
          <g fill="#666" stroke="none">
            <circle cx="14.500" cy="20" r="1.900" />
            <circle cx="22" cy="20" r="1.900" />
            <circle cx="29.500" cy="20" r="1.900" />
          </g>
        </Action>
      </div>
      <div className="h-[10px] w-[274px] self-center rounded-full bg-black" />
    </div>
  );
}

export default function App() {
  return (
    <div className="h-[1663px] w-[768px] overflow-hidden bg-white font-['Inter','Noto_Sans_CJK_SC',sans-serif] font-[375]">
      <StatusBar />
      <Header />
      <Quote />
      <PeriodTabs />
      <MaRow />
      <div className="flex h-[852px] pl-[12px]">
        <div className="w-[488px]">
          <PriceChart />
          <Kdj />
          <Boll />
          <Volume />
        </div>
        <ChipPanel />
      </div>
      <Banner />
      <InfoTabs />
      <BottomBar />
    </div>
  );
}
